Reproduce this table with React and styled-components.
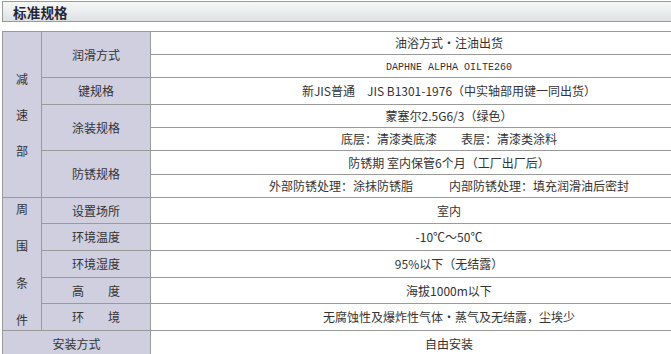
import React from "react";
import styled, { createGlobalStyle } from "styled-components";

const GlobalStyle = createGlobalStyle`
  body {
    margin: 0;
    background: #ffffff;
    overflow: hidden;
    font-family: "Noto Sans CJK SC", "Liberation Sans", sans-serif;
    color: #333333;
  }
`;

const Page = styled.div`
  width: 760px;
  padding: 1px 0 0 2px;
`;

const TitleBar = styled.div`
  height: 19px;
  border: 1px solid #9a9a9a;
  background: linear-gradient(to bottom, #f6f7f7 0%, #eceeef 45%, #dde1e3 100%);
  display: flex;
  align-items: center;
  padding-left: 10px;
`;

const Title = styled.span`
  font-size: 13.5px;
  font-weight: 700;
  color: #262636;
  letter-spacing: 0.2px;
`;

const SpecTable = styled.table`
  margin-top: 9px;
  width: 746px;
  border-collapse: collapse;
  table-layout: fixed;
  font-size: 12px;
  line-height: 14px;
`;

const Row = styled.tr`
  height: ${(p) => p.$h || 23}px;
`;

const Label = styled.td`
  background: #cfcfe0;
  border: 1px solid #9a9a9a;
  text-align: center;
  vertical-align: middle;
  padding: 0;
  white-space: pre;
  color: #333;
`;

const Value = styled.td`
  border: 1px solid #9a9a9a;
  text-align: center;
  vertical-align: middle;
  padding: 0;
  white-space: pre;
  color: #333;
  background: #fff;
`;

const Vertical = styled.div`
  display: flex;
  flex-direction: column;
  align-items: center;
  gap: ${(p) => p.$gap}px;
  > span {
    line-height: 14px;
  }
`;

const Mono = styled.span`
  font-family: "Liberation Mono", monospace;
  font-size: 10px;
`;

function VerticalLabel({ text, gap }) {
  return (
    <Vertical $gap={gap}>
      {text.split("").map((c, i) => (
        <span key={i}>{c}</span>
      ))}
    </Vertical>
  );
}

export default function App() {
  return (
    <Page>
      <GlobalStyle />
      <TitleBar>
        <Title>标准规格</Title>
      </TitleBar>
      <SpecTable>
        <colgroup>
          <col style={{ width: 39 }} />
          <col style={{ width: 109 }} />
          <col />
        </colgroup>
        <tbody>
          <Row $h={23}>
            <Label rowSpan={7}>
              <VerticalLabel text="减速部" gap={22} />
            </Label>
            <Label rowSpan={2}>润滑方式</Label>
            <Value>油浴方式・注油出货</Value>
          </Row>
          <Row $h={23}>
            <Value>
              <Mono>DAPHNE ALPHA OILTE260</Mono>
            </Value>
          </Row>
          <Row $h={27}>
            <Label>键规格</Label>
            <Value>新JIS普通　JIS B1301-1976（中实轴部用键一同出货）</Value>
          </Row>
          <Row $h={23}>
            <Label rowSpan={2}>涂装规格</Label>
            <Value>蒙塞尔2.5G6/3（绿色）</Value>
          </Row>
          <Row $h={23}>
            <Value>底层：清漆类底漆　　表层：清漆类涂料</Value>
          </Row>
          <Row $h={24}>
            <Label rowSpan={2}>防锈规格</Label>
            <Value>防锈期 室内保管6个月（工厂出厂后）</Value>
          </Row>
          <Row $h={23}>
            <Value>外部防锈处理：涂抹防锈脂　　　内部防锈处理：填充润滑油后密封</Value>
          </Row>
          <Row $h={26}>
            <Label rowSpan={5}>
              <VerticalLabel text="周围条件" gap={23} />
            </Label>
            <Label>设置场所</Label>
            <Value>室内</Value>
          </Row>
          <Row $h={27}>
            <Label>环境温度</Label>
            <Value>-10℃～50℃</Value>
          </Row>
          <Row $h={27}>
            <Label>环境湿度</Label>
            <Value>95%以下（无结露）</Value>
          </Row>
          <Row $h={26}>
            <Label>高　　度</Label>
            <Value>海拔1000m以下</Value>
          </Row>
          <Row $h={27}>
            <Label>环　　境</Label>
            <Value>无腐蚀性及爆炸性气体・蒸气及无结露，尘埃少</Value>
          </Row>
          <Row $h={27}>
            <Label colSpan={2}>安装方式</Label>
            <Value>自由安装</Value>
          </Row>
        </tbody>
      </SpecTable>
    </Page>
  );
}
